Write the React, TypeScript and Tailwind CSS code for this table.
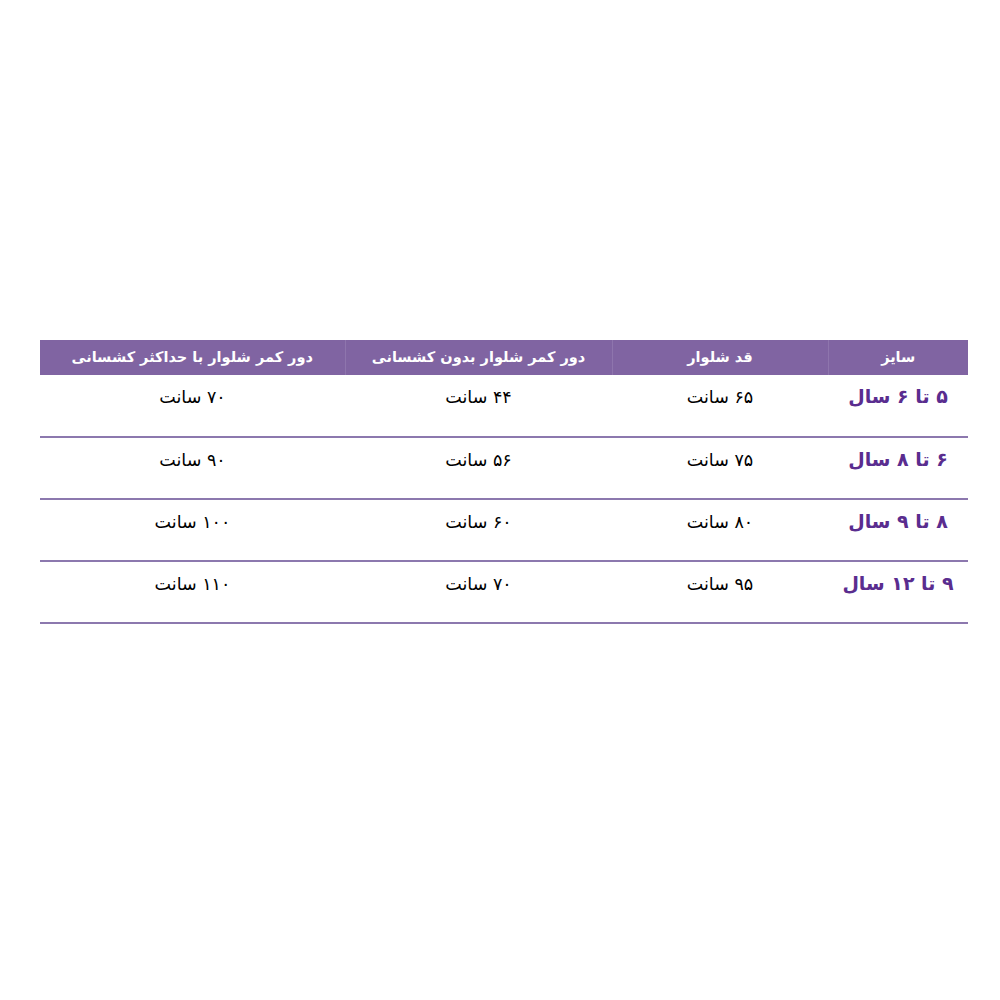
const headers = [
  { label: "سایز", w: "w-[140px]" },
  { label: "قد شلوار", w: "w-[216px]" },
  { label: "دور کمر شلوار بدون کشسانی", w: "w-[267px]" },
  { label: "دور کمر شلوار با حداکثر کشسانی", w: "w-[305px]" },
];

const rows = [
  ["۵ تا ۶ سال", "۶۵ سانت", "۴۴ سانت", "۷۰ سانت"],
  ["۶ تا ۸ سال", "۷۵ سانت", "۵۶ سانت", "۹۰ سانت"],
  ["۸ تا ۹ سال", "۸۰ سانت", "۶۰ سانت", "۱۰۰ سانت"],
  ["۹ تا ۱۲ سال", "۹۵ سانت", "۷۰ سانت", "۱۱۰ سانت"],
];

export default function App() {
  return (
    <div className="w-[1000px] h-[1000px] bg-white pt-[340px] pl-[40px] font-['DejaVu_Sans',sans-serif]">
      <table dir="rtl" className="w-[928px] border-collapse">
        <thead>
          <tr className="bg-[#8064a2] h-[35px]">
            {headers.map((h, i) => (
              <th
                key={i}
                className={`${h.w} p-0 text-center align-middle text-white font-bold text-[14.5px] ${
                  i > 0 ? "border-r border-[#8e75ad]" : ""
                }`}
              >
                {h.label}
              </th>
            ))}
          </tr>
        </thead>
        <tbody>
          {rows.map((r, ri) => (
            <tr key={ri} className="h-[62px] border-b-2 border-[#8c78ae]">
              <td className="p-0 pt-[7px] align-top text-center text-[19px] font-bold text-[#5a2d8f]">
                {r[0]}
              </td>
              {r.slice(1).map((c, ci) => (
                <td key={ci} className="p-0 pt-[9px] align-top text-center text-[17.5px] text-black">
                  {c}
                </td>
              ))}
            </tr>
          ))}
        </tbody>
      </table>
    </div>
  );
}
